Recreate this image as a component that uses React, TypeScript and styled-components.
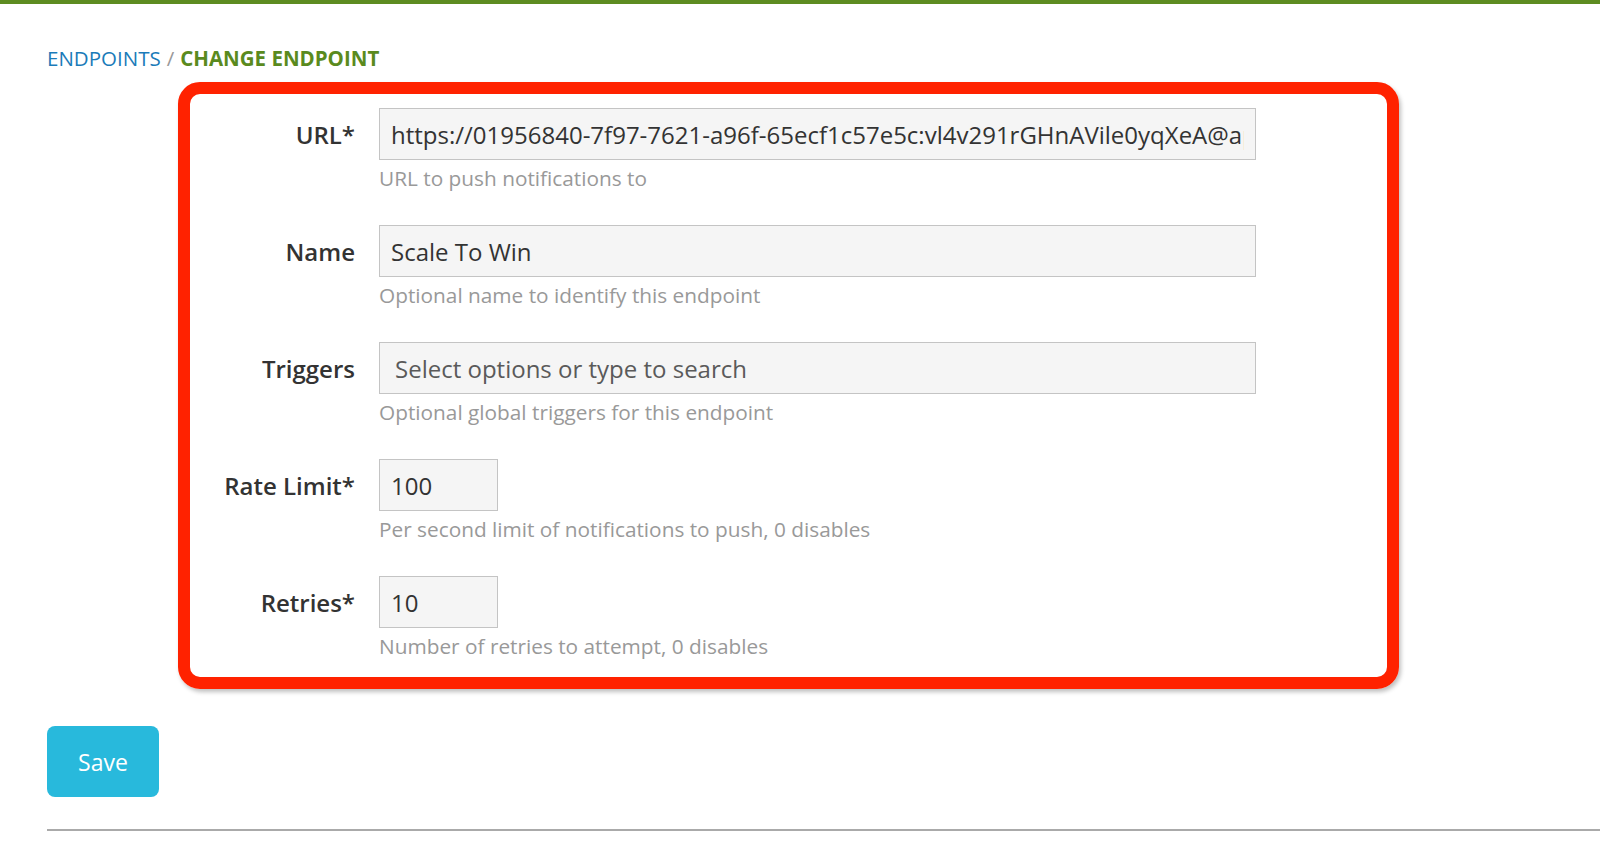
import styled, { createGlobalStyle } from "styled-components";

const GlobalStyle = createGlobalStyle`
  html, body {
    margin: 0;
    padding: 0;
    background: #ffffff;
    font-family: "Open Sans", "Liberation Sans", sans-serif;
    color: #333333;
  }
`;

const TopBar = styled.div`
  height: 4px;
  background-color: #5d8c21;
`;

const Page = styled.div`
  padding-left: 47px;
`;

const Breadcrumb = styled.nav`
  margin-top: 41px;
  font-size: 20.5px;
  line-height: 27px;
  text-transform: uppercase;
`;

const CrumbLink = styled.a`
  color: #1b7bb9;
  text-decoration: none;
`;

const CrumbSep = styled.span`
  color: #999999;
  margin: 0 6px;
`;

const CrumbCurrent = styled.span`
  color: #5a8a1e;
  font-weight: 700;
`;

const Highlight = styled.div`
  margin: 10px 0 0 131px;
  width: 1221px;
  box-sizing: border-box;
  border: 12px solid #ff2200;
  border-radius: 22px;
  box-shadow: 2px 3px 4px rgba(0, 0, 0, 0.25);
  padding: 14px 0 17px;
`;

const Row = styled.div`
  display: grid;
  grid-template-columns: 165px 877px;
  column-gap: 24px;
  margin-bottom: 33px;

  &:last-child {
    margin-bottom: 0;
  }
`;

const Label = styled.label`
  grid-column: 1;
  height: 52px;
  display: flex;
  align-items: center;
  justify-content: flex-end;
  font-size: 24px;
  font-weight: 600;
  color: #333333;
  padding-top: 1px;
  box-sizing: border-box;
`;

const Input = styled.input<{ $narrow?: boolean }>`
  grid-column: 2;
  width: ${(p) => (p.$narrow ? "119px" : "877px")};
  height: 52px;
  box-sizing: border-box;
  border: 1.5px solid #c4c4c4;
  background: #f5f5f5;
  font-family: "Open Sans", "Liberation Sans", sans-serif;
  font-size: 24px;
  color: #333333;
  padding: 0 11px;
  outline: none;
`;

const SelectBox = styled.div`
  grid-column: 2;
  width: 877px;
  height: 52px;
  box-sizing: border-box;
  border: 1.5px solid #c4c4c4;
  background: #f5f5f5;
  display: flex;
  align-items: center;
  padding: 0 15px;
  font-size: 24px;
  color: #5a5a5a;
`;

const Help = styled.div`
  grid-column: 2;
  margin-top: 5px;
  font-size: 20.8px;
  line-height: 27px;
  color: #999999;
`;

const SaveButton = styled.button`
  margin-top: 37px;
  width: 112px;
  height: 71px;
  border: none;
  border-radius: 8px;
  background: #28b9dc;
  color: #ffffff;
  font-family: "Open Sans", "Liberation Sans", sans-serif;
  font-size: 23px;
  cursor: pointer;
`;

const Divider = styled.hr`
  margin: 32px 0 0;
  border: none;
  border-top: 2px solid #aaaaaa;
`;

const url =
  "https://01956840-7f97-7621-a96f-65ecf1c57e5c:vl4v291rGHnAVile0yqXeA@api.scaletowin.example/hooks/notify";

export default function App() {
  return (
    <>
      <GlobalStyle />
      <TopBar />
      <Page>
        <Breadcrumb>
          <CrumbLink href="#">Endpoints</CrumbLink>
          <CrumbSep>/</CrumbSep>
          <CrumbCurrent>Change Endpoint</CrumbCurrent>
        </Breadcrumb>
        <Highlight>
          <Row>
            <Label>URL*</Label>
            <Input defaultValue={url} />
            <Help>URL to push notifications to</Help>
          </Row>
          <Row>
            <Label>Name</Label>
            <Input defaultValue="Scale To Win" />
            <Help>Optional name to identify this endpoint</Help>
          </Row>
          <Row>
            <Label>Triggers</Label>
            <SelectBox>Select options or type to search</SelectBox>
            <Help>Optional global triggers for this endpoint</Help>
          </Row>
          <Row>
            <Label>Rate Limit*</Label>
            <Input $narrow defaultValue="100" />
            <Help>Per second limit of notifications to push, 0 disables</Help>
          </Row>
          <Row>
            <Label>Retries*</Label>
            <Input $narrow defaultValue="10" />
            <Help>Number of retries to attempt, 0 disables</Help>
          </Row>
        </Highlight>
        <SaveButton>Save</SaveButton>
        <Divider />
      </Page>
    </>
  );
}
